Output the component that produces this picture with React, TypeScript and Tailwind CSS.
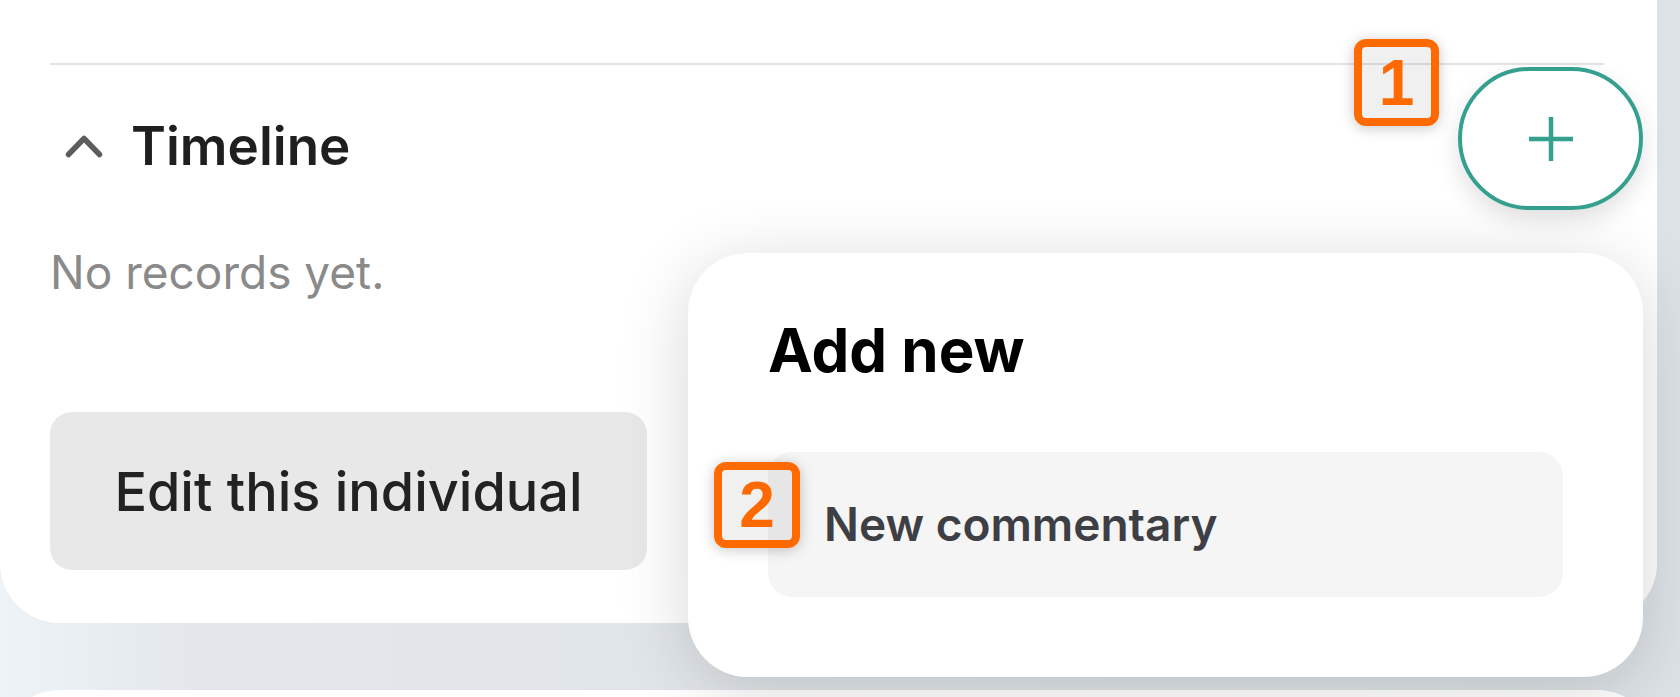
import React from 'react';

const Marker: React.FC<{ n: string; className: string }> = ({ n, className }) => (
  <div
    className={`absolute flex items-center justify-center rounded-[12px] border-[8px] border-[#ff6a00] bg-black/[0.06] shadow-[0_2px_14px_rgba(0,0,0,0.22)] ${className}`}
  >
    <span className="font-['Liberation_Sans',sans-serif] text-[64px] font-bold leading-none text-[#ff6a00]">{n}</span>
  </div>
);

const App: React.FC = () => {
  return (
    <div className="relative h-[697px] w-[1680px] overflow-hidden bg-[linear-gradient(90deg,#eef3f7_0%,#e3e7eb_12%,#dde2e6_100%)] font-['Inter',sans-serif]">
      <div className="flex flex-col">
        {/* Individual card */}
        <div className="mr-[23px] rounded-b-[60px] bg-white pb-[53px] pl-[50px] pr-[53px] pt-[63px]">
          <div className="h-[2px] bg-[#e4e4e4]" />

          <div className="mt-[49px] flex h-[64px] items-center">
            <svg className="ml-[15px] h-[24px] w-[38px]" viewBox="0 0 38 24" fill="none">
              <path d="M3.5 20.5 L19 4.5 L34.5 20.5" stroke="#5c5c5c" strokeWidth="5.5" strokeLinecap="round" strokeLinejoin="round" />
            </svg>
            <h3 className="ml-[28px] text-[53px] font-semibold leading-[64px] text-[#1f1f1f]">Timeline</h3>
          </div>

          <p className="mt-[67px] text-[46px] leading-[54px] text-[#8a8a8a]">No records yet.</p>

          <button className="mt-[113px] flex h-[158px] w-[597px] items-center justify-center rounded-[22px] bg-[#e8e8e8] text-[54px] font-medium text-[#222]">
            Edit this individual
          </button>
        </div>

        {/* Next card */}
        <div className="mr-[23px] mt-[67px] h-[100px] rounded-t-[60px] bg-white" />
      </div>

      {/* Floating add button */}
      <button className="absolute left-[1458px] top-[67px] flex h-[143px] w-[185px] items-center justify-center rounded-full border-[4px] border-[#35a08e] bg-white shadow-[0_10px_24px_rgba(0,0,0,0.12)]">
        <svg className="h-[46px] w-[46px]" viewBox="0 0 46 46" fill="none">
          <path d="M23 1 V45 M1 23 H45" stroke="#35a08e" strokeWidth="4.5" />
        </svg>
      </button>

      {/* Add new popover */}
      <div className="absolute left-[688px] top-[253px] h-[424px] w-[955px] rounded-[60px] bg-white px-[80px] pt-[61px] shadow-[0_12px_70px_rgba(0,0,0,0.16)]">
        <h2 className="text-[60px] font-bold leading-[72px] text-black">Add new</h2>
        <div className="mt-[66px] flex h-[145px] items-center rounded-[24px] bg-[#f5f5f5] pl-[56px] text-[46px] font-semibold text-[#3d3f44]">
          New commentary
        </div>
      </div>

      <Marker n="1" className="left-[1354px] top-[39px] h-[87px] w-[85px]" />
      <Marker n="2" className="left-[714px] top-[462px] h-[86px] w-[86px]" />
    </div>
  );
};

export default App;
